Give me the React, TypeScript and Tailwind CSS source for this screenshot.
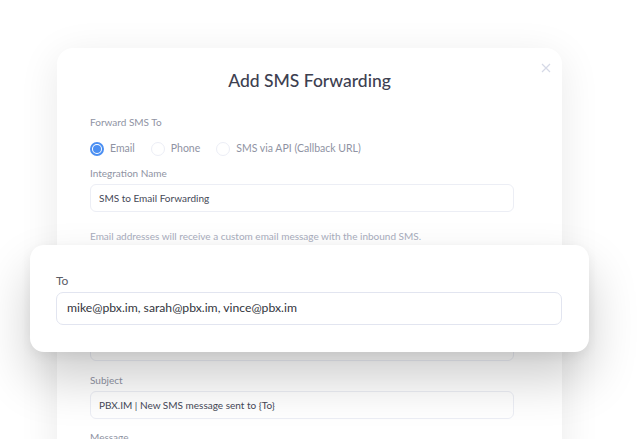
import React from "react";

const font = { fontFamily: "Lato, 'Noto Sans', sans-serif" };

function Radio({ checked, label }: { checked?: boolean; label: string }) {
  return (
    <div className="flex items-center gap-[6px]">
      {checked ? (
        <span className="w-[14px] h-[14px] rounded-full border-[2px] border-[#4b8ff2] flex items-center justify-center bg-white">
          <span className="w-[8px] h-[8px] rounded-full bg-[#4b8ff2]" />
        </span>
      ) : (
        <span className="w-[14px] h-[14px] rounded-full border border-[#eceef6] bg-white" />
      )}
      <span className="text-[10.5px] text-[#8f93a3]">{label}</span>
    </div>
  );
}

function Field({ label, value, mt }: { label: string; value: string; mt?: string }) {
  return (
    <div className={`flex flex-col ${mt ?? ""}`}>
      <div className="h-[15px] text-[10px] leading-[15px] text-[#8f93a3]">{label}</div>
      <div className="mt-[3px] w-[424px] h-[28px] rounded-[6px] border border-[#eceef5] bg-white flex items-center px-[8px] text-[10px] text-[#454857]">
        {value}
      </div>
    </div>
  );
}

export default function App() {
  return (
    <div className="relative w-[640px] h-[439px] overflow-hidden bg-white" style={font}>
      <div className="ml-[57px] mt-[48px] w-[505px] h-[420px] rounded-[16px] bg-white shadow-[0_8px_40px_rgba(0,0,0,0.09)] relative">
        <div className="absolute right-[11px] top-[15px] text-[#d5d9e6]">
          <svg width="10" height="10" viewBox="0 0 10 10" fill="none" stroke="currentColor" strokeWidth="1.2">
            <path d="M1 1L9 9M9 1L1 9" />
          </svg>
        </div>
        <div className="pt-[21px] text-center text-[17.5px] leading-[24px] font-medium text-[#3d4050]">
          Add SMS Forwarding
        </div>
        <div className="px-[33px] flex flex-col">
          <div className="mt-[22px] h-[15px] text-[10px] leading-[15px] text-[#8f93a3]">Forward SMS To</div>
          <div className="mt-[11px] flex items-center gap-[16px] h-[15px]">
            <Radio checked label="Email" />
            <Radio label="Phone" />
            <Radio label="SMS via API (Callback URL)" />
          </div>
          <Field mt="mt-[10px]" label="Integration Name" value="SMS to Email Forwarding" />
          <div className="mt-[17px] h-[15px] text-[10px] leading-[15px] text-[#a9adbd]">
            Email addresses will receive a custom email message with the inbound SMS.
          </div>
          <Field mt="mt-[71px]" label="" value="" />
          <Field mt="mt-[12px]" label="Subject" value="PBX.IM | New SMS message sent to {To}" />
          <div className="mt-[11px] h-[15px] text-[10px] leading-[15px] text-[#8f93a3]">Message</div>
        </div>
      </div>
      <div className="absolute left-[30px] top-[245px] w-[559px] h-[107px] rounded-[14px] bg-white shadow-[0_26px_50px_rgba(0,0,0,0.2),0_4px_12px_rgba(0,0,0,0.06)] px-[26px] pt-[28px]">
        <div className="h-[16px] leading-[16px] text-[12px] text-[#5a5d66]">To</div>
        <div className="mt-[3px] w-[506px] h-[33px] rounded-[7px] border border-[#e2e5f0] flex items-center px-[10px] text-[12.2px] text-[#33353d]">
          mike@pbx.im, sarah@pbx.im, vince@pbx.im
        </div>
      </div>
    </div>
  );
}
